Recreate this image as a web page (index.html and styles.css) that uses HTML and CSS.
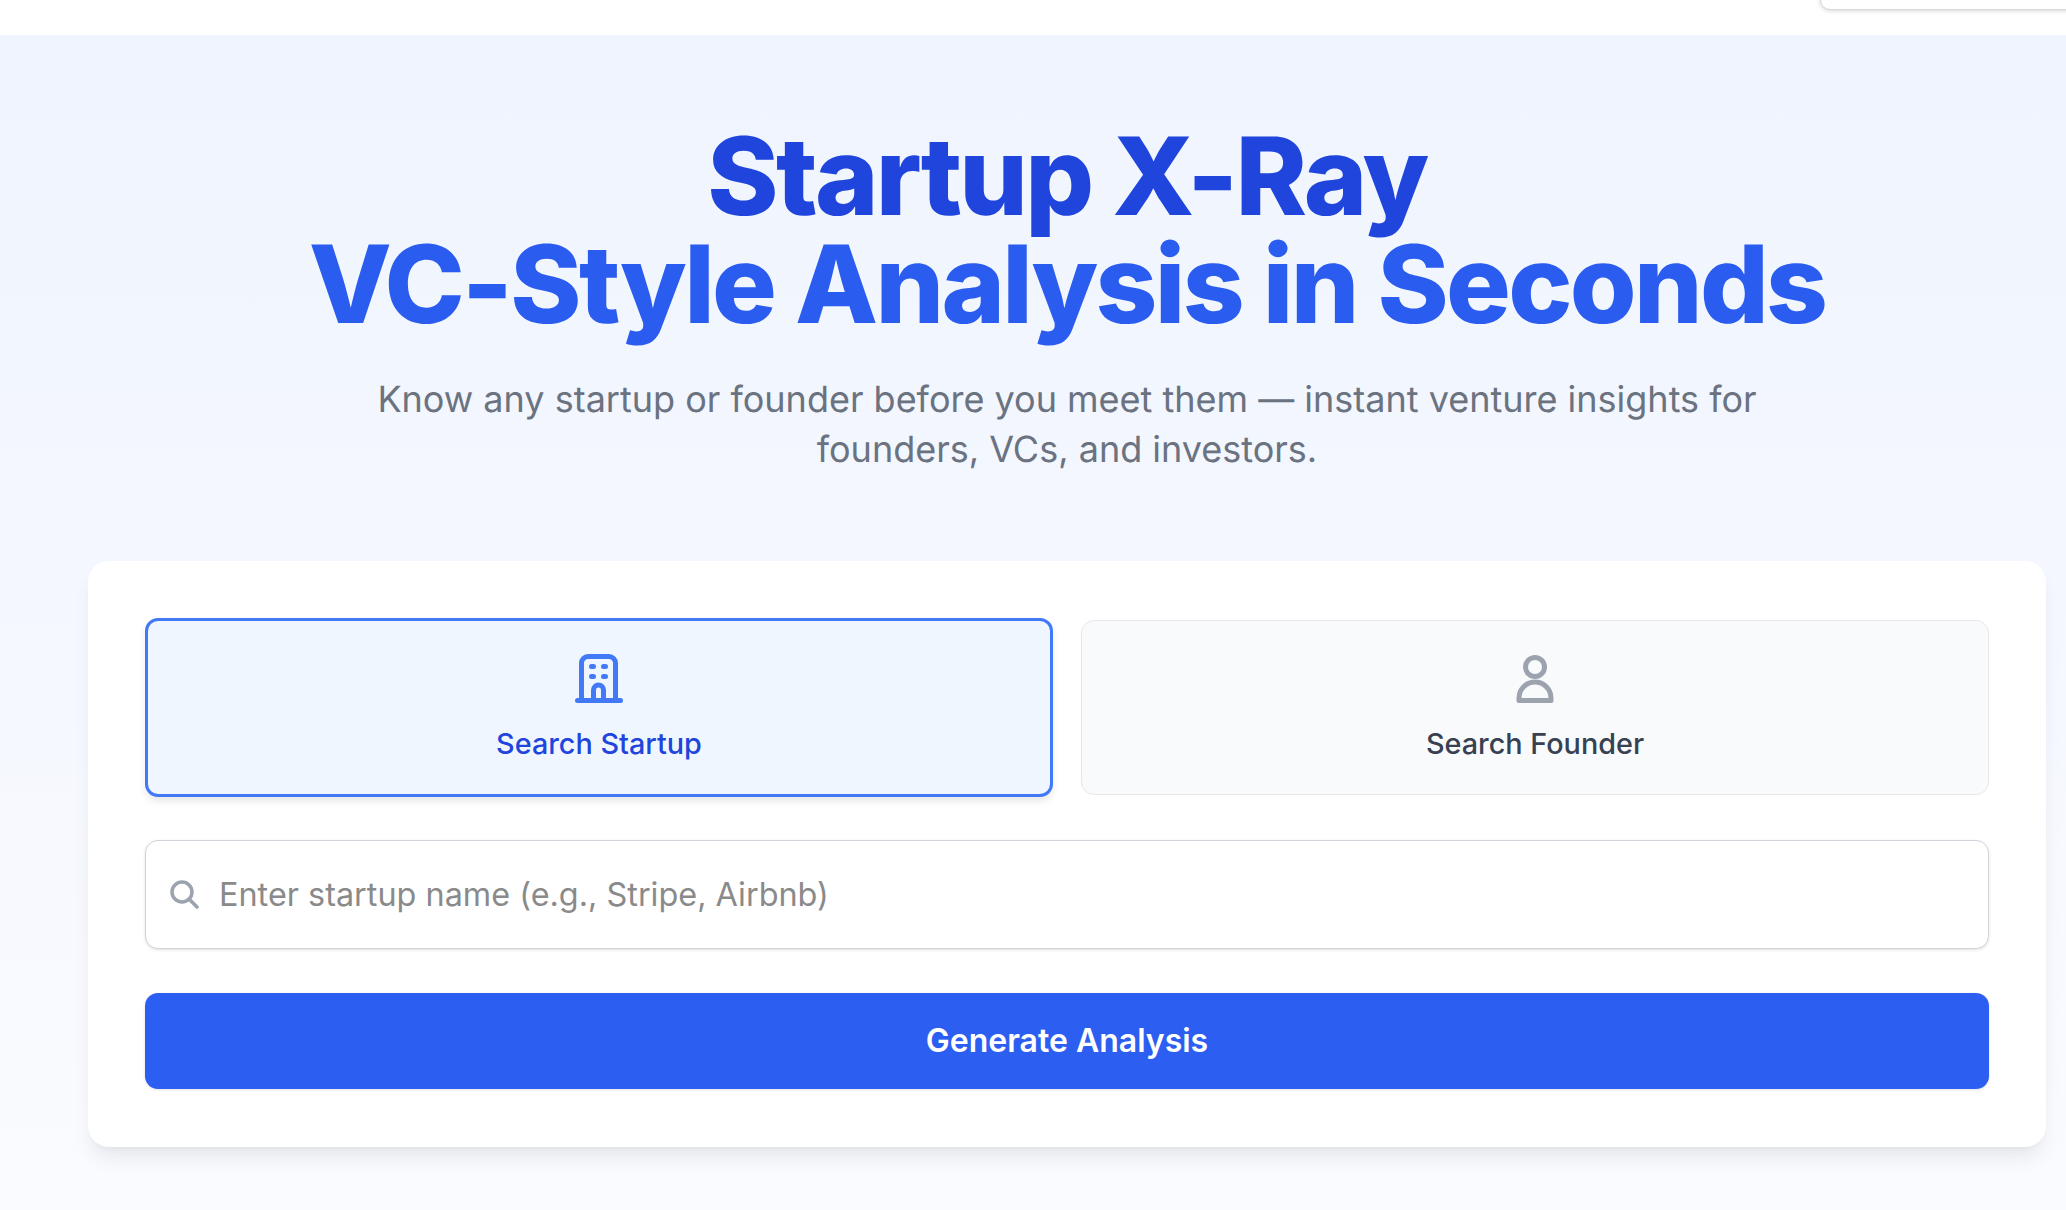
FILE: index.html
```html
<!DOCTYPE html>
<html lang="en">
<head>
<meta charset="utf-8">
<title>Startup X-Ray</title>
<link rel="stylesheet" href="styles.css">
</head>
<body>
<header class="topbar"><div class="popup"></div></header>
<main class="hero">
  <h1 class="title"><span class="title-dark">Startup X-Ray</span><span class="title-light">VC-Style Analysis in Seconds</span></h1>
  <p class="subtitle">Know any startup or founder before you meet them — instant venture insights for founders, VCs, and investors.</p>
  <section class="card">
    <div class="tabs">
      <button class="tab tab-active" type="button">
        <svg class="tab-icon" width="48" height="50" viewBox="0 0 48 50" fill="none" stroke="currentColor" stroke-width="5" stroke-linecap="round" stroke-linejoin="round"><path d="M2.5 46.5h43"/><path d="M6.5 46.5V9A6.5 6.5 0 0 1 13 2.5h21A6.5 6.5 0 0 1 40.5 9v37.5"/><path d="M16.500 12.500h2M28.500 12.500h2M16.500 22.500h2M28.500 22.500h2"/><path d="M18.500 46V36a5 5 0 0 1 10 0v10"/></svg>
        <span>Search Startup</span>
      </button>
      <button class="tab" type="button">
        <svg class="tab-icon tab-icon-muted" width="38" height="50" viewBox="0 0 38 50" fill="none" stroke="currentColor" stroke-width="5" stroke-linecap="round" stroke-linejoin="round"><circle cx="19" cy="13" r="9.500"/><path d="M3 46.500h32V44a16 16 0 0 0-32 0z"/></svg>
        <span>Search Founder</span>
      </button>
    </div>
    <div class="search">
      <svg class="search-icon" width="29" height="29" viewBox="0 0 29 29" fill="none" stroke="currentColor" stroke-width="3.500" stroke-linecap="round"><circle cx="12" cy="12" r="10"/><path d="M19.500 19.500 27 27"/></svg>
      <input class="search-input" type="text" placeholder="Enter startup name (e.g., Stripe, Airbnb)">
    </div>
    <button class="submit" type="button">Generate Analysis</button>
  </section>
</main>
</body>
</html>
```

FILE: styles.css
```css
* { box-sizing: border-box; }
html, body { margin: 0; height: 100%; overflow: hidden; }
body {
  background: #fff;
  font-family: Inter, "Liberation Sans", sans-serif;
  text-rendering: geometricPrecision;
  display: flex;
  flex-direction: column;
}
.topbar { height: 35px; flex: none; background: #fff; position: relative; }
.popup {
  position: absolute;
  left: 1820px;
  right: -20px;
  top: -20px;
  height: 30px;
  background: #fff;
  border: 1px solid #d5d7db;
  border-radius: 10px;
  box-shadow: 0 1px 4px rgba(0, 0, 0, .16);
}
.hero {
  flex: 1;
  background: linear-gradient(180deg, #eff4fe 0%, #fafbff 100%);
  padding: 88px 20px 0 88px;
  display: flex;
  flex-direction: column;
  align-items: center;
}
.title {
  margin: 0;
  font-size: 108px;
  font-weight: 800;
  line-height: 108px;
  letter-spacing: -.025em;
  text-align: center;
}
.title span { display: block; }
.title-dark { color: #1f45dc; }
.title-light { color: #2b5cf0; }
.subtitle {
  margin: 35px 0 0;
  width: 1450px;
  font-size: 36px;
  line-height: 50px;
  color: #6b7280;
  text-align: center;
}
.card {
  align-self: stretch;
  margin-top: 87px;
  height: 586px;
  background: #fff;
  border-radius: 21px;
  padding: 57px;
  box-shadow: 0 14px 20px -4px rgba(0, 0, 0, .08), 0 5px 8px -5px rgba(0, 0, 0, .05);
}
.tabs {
  display: grid;
  grid-template-columns: 908px 908px;
  justify-content: space-between;
  align-items: center;
  height: 179px;
}
.tab {
  height: 175px;
  border: 1px solid #e5e7eb;
  border-radius: 13px;
  background: #f9fafb;
  color: #374151;
  font: 500 28.8px Inter, "Liberation Sans", sans-serif;
  display: flex;
  flex-direction: column;
  align-items: center;
  padding: 33px 0 0;
  gap: 22px;
}
.tab-active {
  height: 179px;
  padding-top: 33px;
  border: 3px solid #4279f7;
  background: #eff6ff;
  color: #1f45dc;
  box-shadow: 0 5px 8px -1px rgba(0, 0, 0, .1);
}
.tab-icon { color: #4279f7; display: block; }
.tab-icon-muted { color: #9ca3af; }
.search { position: relative; margin-top: 43px; height: 109px; }
.search-icon { position: absolute; left: 25px; top: 40px; color: #9ca3af; }
.search-input {
  width: 100%;
  height: 100%;
  border: 1px solid #d1d5db;
  border-radius: 13px;
  background: #fff;
  padding: 0 20px 0 73px;
  font: 400 32.4px Inter, "Liberation Sans", sans-serif;
  box-shadow: 0 1px 3px rgba(0, 0, 0, .12);
  outline: none;
}
.search-input::placeholder { color: #8a8a8a; opacity: 1; }
.submit {
  display: block;
  width: 100%;
  height: 96px;
  margin-top: 44px;
  padding: 0 0 2px;
  border: 0;
  border-radius: 13px;
  background: #2d5ef2;
  color: #fff;
  font: 600 32px Inter, "Liberation Sans", sans-serif;
  box-shadow: 0 1px 3px rgba(0, 0, 0, .12);
}
```
